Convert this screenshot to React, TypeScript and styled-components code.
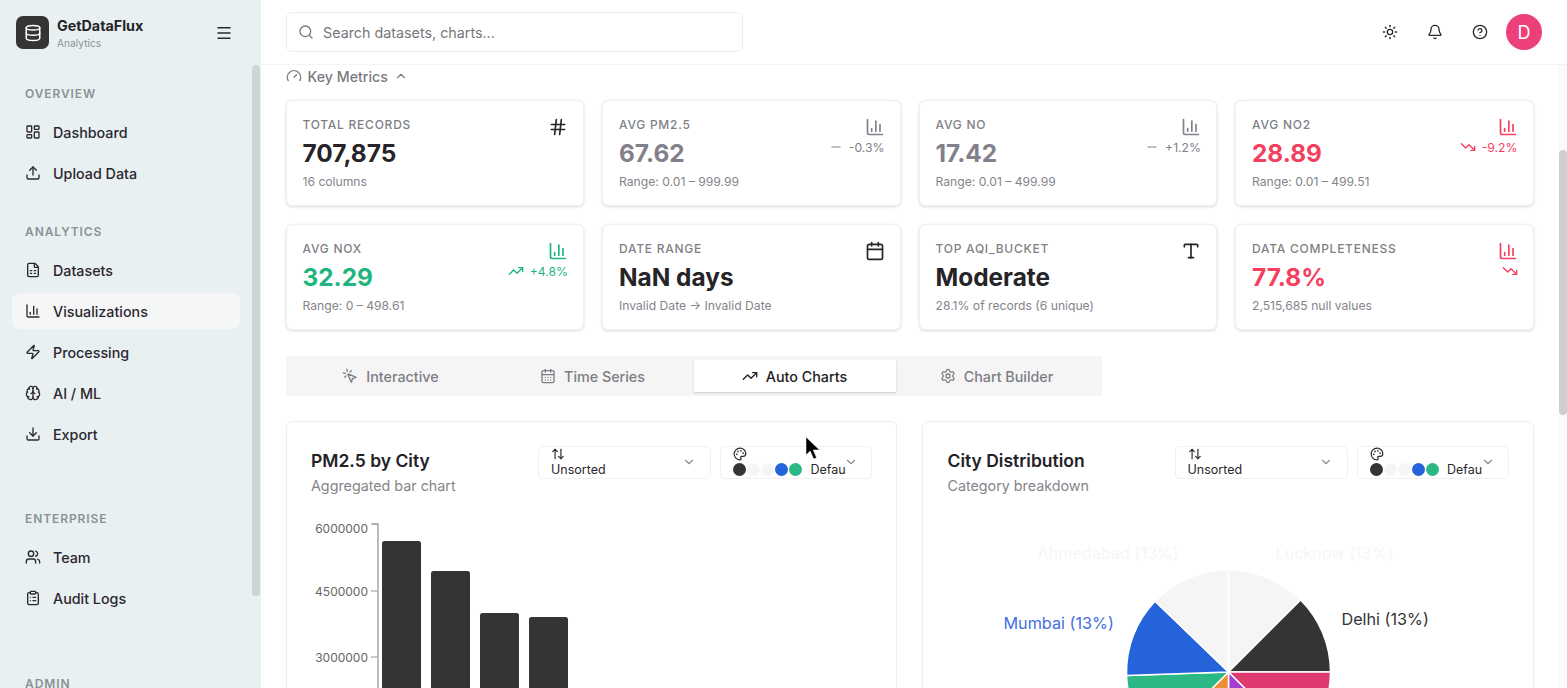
import { FC, ReactNode } from "react";
import styled, { createGlobalStyle } from "styled-components";
import {
    ArrowUpDown, Bell, Brain, Calendar, CalendarDays, ChartColumn, ChevronDown, ChevronUp,
    CircleHelp, ClipboardList, Database, Download, FileSpreadsheet, Gauge, Hash, LayoutDashboard,
    Menu, Minus, MousePointerClick, Palette, Search, Settings, Sun, TrendingDown, TrendingUp,
    Type, Upload, Users, Zap,
} from "lucide-react";

const GlobalStyle = createGlobalStyle`
    html, body {
        margin: 0;
        height: 100%;
        overflow: hidden;
        background: #fff;
        font-family: Inter, "Liberation Sans", sans-serif;
        color: #232126;
    }
`;

type Tone = "plain" | "muted" | "bad" | "good";

const toneColor: Record<Tone, string> = {
    plain: "#262428",
    muted: "#82808a",
    bad: "#f43f5e",
    good: "#1fb57f",
};

const metrics: {
    label: string; value: string; sub: string; tone: Tone; icon: ReactNode; delta?: string; trend?: ReactNode;
}[] = [
    { label: "Total Records", value: "707,875", sub: "16 columns", tone: "plain", icon: <Hash size={20} /> },
    { label: "Avg PM2.5", value: "67.62", sub: "Range: 0.01 – 999.99", tone: "muted", icon: <ChartColumn size={20} />, delta: "-0.3%", trend: <Minus size={14} /> },
    { label: "Avg NO", value: "17.42", sub: "Range: 0.01 – 499.99", tone: "muted", icon: <ChartColumn size={20} />, delta: "+1.2%", trend: <Minus size={14} /> },
    { label: "Avg NO2", value: "28.89", sub: "Range: 0.01 – 499.51", tone: "bad", icon: <ChartColumn size={20} />, delta: "-9.2%", trend: <TrendingDown size={16} /> },
    { label: "Avg NOX", value: "32.29", sub: "Range: 0 – 498.61", tone: "good", icon: <ChartColumn size={20} />, delta: "+4.8%", trend: <TrendingUp size={16} /> },
    { label: "Date Range", value: "NaN days", sub: "Invalid Date → Invalid Date", tone: "plain", icon: <Calendar size={20} /> },
    { label: "Top AQI_Bucket", value: "Moderate", sub: "28.1% of records (6 unique)", tone: "plain", icon: <Type size={20} /> },
    { label: "Data Completeness", value: "77.8%", sub: "2,515,685 null values", tone: "bad", icon: <ChartColumn size={20} />, delta: "", trend: <TrendingDown size={16} /> },
];

const navSections = [
    {
        title: "Overview", gap: 33,
        items: [
            { label: "Dashboard", icon: <LayoutDashboard size={16} /> },
            { label: "Upload Data", icon: <Upload size={16} /> },
        ],
    },
    {
        title: "Analytics", gap: 59,
        items: [
            { label: "Datasets", icon: <FileSpreadsheet size={16} /> },
            { label: "Visualizations", icon: <ChartColumn size={16} />, active: true },
            { label: "Processing", icon: <Zap size={16} /> },
            { label: "AI / ML", icon: <Brain size={16} /> },
            { label: "Export", icon: <Download size={16} /> },
        ],
    },
    {
        title: "Enterprise", gap: 60,
        items: [
            { label: "Team", icon: <Users size={16} /> },
            { label: "Audit Logs", icon: <ClipboardList size={16} /> },
        ],
    },
    { title: "Admin", gap: 0, items: [] },
];

const tabs = [
    { label: "Interactive", icon: <MousePointerClick size={16} /> },
    { label: "Time Series", icon: <CalendarDays size={16} /> },
    { label: "Auto Charts", icon: <TrendingUp size={16} />, active: true },
    { label: "Chart Builder", icon: <Settings size={16} /> },
];

const swatches = ["#353335", "#f5f5f5", "#f5f5f5", "#2563db", "#2bb885"];

const bars = [
    { x: 71, y: 26, w: 39 },
    { x: 120, y: 56, w: 39 },
    { x: 169, y: 98, w: 39 },
    { x: 218, y: 102, w: 39 },
];

const ticks = [
    { label: "6000000", y: 9, dy: 8.5 },
    { label: "4500000", y: 76, dy: 4.5 },
    { label: "3000000", y: 142, dy: 4.5 },
];

const PIE_CX = 280.5;
const PIE_CY = 157;
const PIE_R = 102;

const slices = [
    { from: 0, to: 45, fill: "#f5f5f5" },
    { from: 45, to: 90, fill: "#353335" },
    { from: 90, to: 135, fill: "#df3a70" },
    { from: 135, to: 180, fill: "#a33fd0" },
    { from: 180, to: 225, fill: "#ec8f35" },
    { from: 225, to: 268, fill: "#2bb885" },
    { from: 268, to: 314, fill: "#2563db" },
    { from: 314, to: 360, fill: "#f5f5f5" },
];

const slicePath = (from: number, to: number) => {
    const point = (deg: number) => {
        const rad = (deg * Math.PI) / 180;
        return `${PIE_CX + PIE_R * Math.sin(rad)} ${PIE_CY - PIE_R * Math.cos(rad)}`;
    };
    return `M${PIE_CX} ${PIE_CY} L${point(from)} A${PIE_R} ${PIE_R} 0 0 1 ${point(to)} Z`;
};

const SortSelect: FC = () => (
    <SelectBox $width={173}>
        <SelectStack>
            <ArrowUpDown size={14} />
            <SelectValue>Unsorted</SelectValue>
        </SelectStack>
        <SelectChevron><ChevronDown size={14} /></SelectChevron>
    </SelectBox>
);

const PaletteSelect: FC = () => (
    <SelectBox $width={152}>
        <SelectStack>
            <Palette size={14} />
            <SwatchRow>
                {swatches.map((color, i) => <Swatch key={i} $color={color} />)}
                <SelectValue>Defau</SelectValue>
            </SwatchRow>
        </SelectStack>
        <SelectChevron $tight><ChevronDown size={14} /></SelectChevron>
    </SelectBox>
);

const ChartHeader: FC<{ title: string; sub: string }> = ({ title, sub }) => (
    <CardHeader>
        <div>
            <CardTitle>{title}</CardTitle>
            <CardSub>{sub}</CardSub>
        </div>
        <SelectGroup>
            <SortSelect />
            <PaletteSelect />
        </SelectGroup>
    </CardHeader>
);

export default function App() {
    return (
        <Shell>
            <GlobalStyle />
            <Sidebar>
                <Brand>
                    <LogoMark><Database size={18} /></LogoMark>
                    <BrandText>
                        <BrandName>GetDataFlux</BrandName>
                        <BrandSub>Analytics</BrandSub>
                    </BrandText>
                    <MenuButton><Menu size={18} /></MenuButton>
                </Brand>
                <Nav>
                    {navSections.map((section) => (
                        <NavSection key={section.title} $gap={section.gap}>
                            <NavLabel>{section.title}</NavLabel>
                            {section.items.map((item) => (
                                <NavItem key={item.label} $active={"active" in item}>
                                    {item.icon}
                                    {item.label}
                                </NavItem>
                            ))}
                        </NavSection>
                    ))}
                </Nav>
                <SideThumb />
            </Sidebar>
            <Main>
                <TopBar>
                    <SearchBox>
                        <Search size={16} />
                        Search datasets, charts...
                    </SearchBox>
                    <TopActions>
                        <Sun size={16} />
                        <Bell size={16} />
                        <CircleHelp size={16} />
                        <Avatar>D</Avatar>
                    </TopActions>
                </TopBar>
                <Content>
                    <SectionToggle>
                        <Gauge size={16} />
                        Key Metrics
                        <ChevronUp size={14} />
                    </SectionToggle>
                    <MetricGrid>
                        {metrics.map((m) => (
                            <MetricCard key={m.label}>
                                <div>
                                    <MetricLabel>{m.label}</MetricLabel>
                                    <MetricValue $tone={m.tone}>{m.value}</MetricValue>
                                    <MetricSub>{m.sub}</MetricSub>
                                </div>
                                <MetricSide $tone={m.tone}>
                                    {m.icon}
                                    {m.trend && <Delta>{m.trend}{m.delta}</Delta>}
                                </MetricSide>
                            </MetricCard>
                        ))}
                    </MetricGrid>
                    <TabList>
                        {tabs.map((tab) => (
                            <Tab key={tab.label} $active={!!tab.active}>
                                {tab.icon}
                                {tab.label}
                            </Tab>
                        ))}
                    </TabList>
                    <ChartGrid>
                        <ChartCard>
                            <ChartHeader title="PM2.5 by City" sub="Aggregated bar chart" />
                            <ChartSvg viewBox="0 0 561 300">
                                <path d="M61 9H67V300" fill="none" stroke="#a8a8a8" strokeWidth="1.5" />
                                {ticks.map((t) => (
                                    <g key={t.label}>
                                        <line x1="60" x2="67" y1={t.y} y2={t.y} stroke="#a8a8a8" strokeWidth="1.2" />
                                        <text x="57" y={t.y + t.dy} textAnchor="end" fontSize="12" fill="#666">{t.label}</text>
                                    </g>
                                ))}
                                {bars.map((b) => (
                                    <rect key={b.x} x={b.x} y={b.y} width={b.w} height={300 - b.y} rx="2.5" fill="#353335" />
                                ))}
                            </ChartSvg>
                        </ChartCard>
                        <ChartCard>
                            <ChartHeader title="City Distribution" sub="Category breakdown" />
                            <ChartSvg viewBox="0 0 561 300">
                                <text x="89.5" y="44" fontSize="16.2" fill="#f6f6f6">Ahmedabad (13%)</text>
                                <text x="327.5" y="44" fontSize="16.2" fill="#f6f6f6">Lucknow (13%)</text>
                                <text x="55.5" y="114" fontSize="16.2" fill="#3f6fe0">Mumbai (13%)</text>
                                <text x="393.5" y="110" fontSize="16.2" fill="#353335">Delhi (13%)</text>
                                {slices.map((s) => (
                                    <path key={s.from} d={slicePath(s.from, s.to)} fill={s.fill} stroke="#fff" strokeWidth="1.5" />
                                ))}
                            </ChartSvg>
                        </ChartCard>
                    </ChartGrid>
                </Content>
                <PageTrack><PageThumb /></PageTrack>
            </Main>
            <Pointer viewBox="0 0 16 24">
                <path d="M1 0L1 18L5.2 14L8.6 22L11.6 20.8L8.2 13H14.5Z" fill="#000" stroke="#fff" strokeWidth="0.5" />
            </Pointer>
        </Shell>
    );
}

const Shell = styled.div`
    position: relative;
    display: flex;
    height: 688px;
    overflow: hidden;
`;

const Sidebar = styled.aside`
    position: relative;
    flex: 0 0 261px;
    background: #e9f0f1;
    overflow: hidden;
`;

const Brand = styled.div`
    display: flex;
    align-items: center;
    gap: 8px;
    height: 65px;
    padding: 0 28px 0 16px;
    box-sizing: border-box;
`;

const LogoMark = styled.div`
    display: flex;
    align-items: center;
    justify-content: center;
    width: 33px;
    height: 33px;
    border-radius: 7px;
    background: #353335;
    color: #fff;
`;

const BrandText = styled.div`
    flex: 1;
    display: flex;
    flex-direction: column;
`;

const BrandName = styled.span`
    font-size: 14.3px;
    line-height: 20px;
    font-weight: 700;
    color: #252327;
`;

const BrandSub = styled.span`
    font-size: 10.2px;
    line-height: 14px;
    color: #8a9295;
`;

const MenuButton = styled.div`
    display: flex;
    color: #2a282c;
`;

const Nav = styled.nav`
    padding: 21px 21px 0 12px;
`;

const NavSection = styled.section<{ $gap: number }>`
    display: flex;
    flex-direction: column;
    gap: 5px;
    margin-bottom: ${(p) => p.$gap}px;
`;

const NavLabel = styled.div`
    height: 16px;
    margin-bottom: 7px;
    padding-left: 13px;
    font-size: 12px;
    line-height: 16px;
    font-weight: 600;
    letter-spacing: 0.9px;
    text-transform: uppercase;
    color: #8a9295;
`;

const NavItem = styled.div<{ $active: boolean }>`
    display: flex;
    align-items: center;
    gap: 12px;
    height: 36px;
    padding-left: 13px;
    border-radius: 7px;
    font-size: 14.3px;
    font-weight: 500;
    color: #2b2730;
    background: ${(p) => (p.$active ? "#f5f6f6" : "transparent")};
`;

const SideThumb = styled.div`
    position: absolute;
    top: 65px;
    left: 252px;
    width: 8px;
    height: 531px;
    border-radius: 4px;
    background: #ced5d7;
`;

const Main = styled.main`
    position: relative;
    flex: 1;
    display: flex;
    flex-direction: column;
    min-width: 0;
`;

const TopBar = styled.header`
    flex: 0 0 65px;
    display: flex;
    align-items: center;
    justify-content: space-between;
    padding: 0 25px;
    box-sizing: border-box;
    border-bottom: 1px solid #f3f3f3;
`;

const SearchBox = styled.div`
    display: flex;
    align-items: center;
    gap: 9px;
    width: 457px;
    height: 40px;
    padding-left: 11px;
    box-sizing: border-box;
    border: 1px solid #eeeeee;
    border-radius: 6px;
    font-size: 14.3px;
    color: #77767c;
`;

const TopActions = styled.div`
    display: flex;
    align-items: center;
    gap: 29px;
    color: #2a282c;
`;

const Avatar = styled.div`
    display: flex;
    align-items: center;
    justify-content: center;
    width: 36px;
    height: 36px;
    margin-left: -11px;
    border-radius: 50%;
    background: #ec407a;
    color: #fff;
    font-size: 18px;
`;

const Content = styled.div`
    flex: 1;
    overflow: hidden;
    padding: 1px 33.5px 0 24.5px;
`;

const SectionToggle = styled.div`
    display: flex;
    align-items: center;
    gap: 6px;
    height: 20px;
    margin-bottom: 14px;
    font-size: 14.2px;
    font-weight: 500;
    color: #7a7a82;
`;

const MetricGrid = styled.div`
    display: grid;
    grid-template-columns: repeat(4, 1fr);
    grid-auto-rows: 106px;
    gap: 18px;
`;

const MetricCard = styled.div`
    display: flex;
    justify-content: space-between;
    padding: 16px 15px 0 16px;
    box-sizing: border-box;
    border: 1px solid #f0f0f0;
    border-radius: 6px;
    background: #fff;
    box-shadow: 0 1px 3px rgba(0, 0, 0, 0.14);
`;

const MetricLabel = styled.div`
    font-size: 12px;
    line-height: 16px;
    font-weight: 500;
    letter-spacing: 0.75px;
    text-transform: uppercase;
    color: #807f86;
`;

const MetricValue = styled.div<{ $tone: Tone }>`
    margin-top: 4px;
    font-size: 24.4px;
    line-height: 32px;
    font-weight: 700;
    white-space: nowrap;
    color: ${(p) => toneColor[p.$tone]};
`;

const MetricSub = styled.div`
    margin-top: 5px;
    font-size: 12.15px;
    line-height: 16px;
    color: #85848b;
`;

const MetricSide = styled.div<{ $tone: Tone }>`
    display: flex;
    flex-direction: column;
    align-items: flex-end;
    gap: 2px;
    color: ${(p) => toneColor[p.$tone]};
`;

const Delta = styled.div`
    display: flex;
    align-items: center;
    gap: 6px;
    height: 16px;
    font-size: 12.2px;
    white-space: nowrap;
`;

const TabList = styled.div`
    display: grid;
    grid-template-columns: repeat(4, 202px);
    width: 816px;
    height: 40px;
    margin-top: 26px;
    padding: 4px;
    box-sizing: border-box;
    background: #f5f5f5;
    border-radius: 3px;
`;

const Tab = styled.div<{ $active: boolean }>`
    display: flex;
    align-items: center;
    justify-content: center;
    gap: 8px;
    font-size: 14.3px;
    font-weight: 500;
    color: ${(p) => (p.$active ? "#232126" : "#7d7d85")};
    background: ${(p) => (p.$active ? "#fff" : "transparent")};
    box-shadow: ${(p) => (p.$active ? "0 1px 2px rgba(0, 0, 0, 0.18)" : "none")};
`;

const ChartGrid = styled.div`
    display: grid;
    grid-template-columns: repeat(2, 1fr);
    gap: 25px;
    margin-top: 25px;
`;

const ChartCard = styled.div`
    padding: 24px 24px 0 24.5px;
    border: 1px solid #eeeeee;
    border-radius: 6px;
    background: #fff;
    box-shadow: 0 1px 2px rgba(0, 0, 0, 0.04);
`;

const CardHeader = styled.div`
    display: flex;
    justify-content: space-between;
    align-items: flex-start;
`;

const CardTitle = styled.div`
    font-size: 17.5px;
    line-height: 30px;
    font-weight: 600;
    color: #232126;
`;

const CardSub = styled.div`
    font-size: 14.3px;
    line-height: 20px;
    color: #85848b;
`;

const SelectGroup = styled.div`
    display: flex;
    gap: 9px;
`;

const SelectBox = styled.div<{ $width: number }>`
    position: relative;
    width: ${(p) => p.$width}px;
    height: 33px;
    padding: 0 26px 0 12px;
    box-sizing: border-box;
    border: 1px solid #f0f0f0;
    border-radius: 5px;
`;

const SelectStack = styled.div`
    display: flex;
    flex-direction: column;
    align-items: flex-start;
    color: #2a282c;
    white-space: nowrap;
`;

const SelectValue = styled.span`
    font-size: 12.5px;
    line-height: 17px;
    color: #2a282c;
`;

const SwatchRow = styled.div`
    display: flex;
    align-items: center;
`;

const Swatch = styled.span<{ $color: string }>`
    flex: none;
    width: 13px;
    height: 13px;
    margin-right: 1px;
    border-radius: 50%;
    background: ${(p) => p.$color};
    &:nth-of-type(5) {
        margin-right: 8.5px;
    }
`;

const SelectChevron = styled.span<{ $tight?: boolean }>`
    position: absolute;
    top: 8px;
    right: ${(p) => (p.$tight ? 13 : 14)}px;
    display: flex;
    color: #8d8c92;
`;

const ChartSvg = styled.svg`
    display: block;
    width: 561px;
    height: 300px;
    margin-top: 19px;
    font-family: Inter, "Liberation Sans", sans-serif;
`;

const PageTrack = styled.div`
    position: absolute;
    top: 65px;
    right: 0;
    bottom: 0;
    width: 8px;
    background: #fafafa;
`;

const PageThumb = styled.div`
    width: 8px;
    height: 265px;
    margin-top: 85px;
    border-radius: 4px;
    background: #cfcfcf;
`;

const Pointer = styled.svg`
    position: absolute;
    top: 437px;
    left: 805px;
    width: 16px;
    height: 24px;
`;
